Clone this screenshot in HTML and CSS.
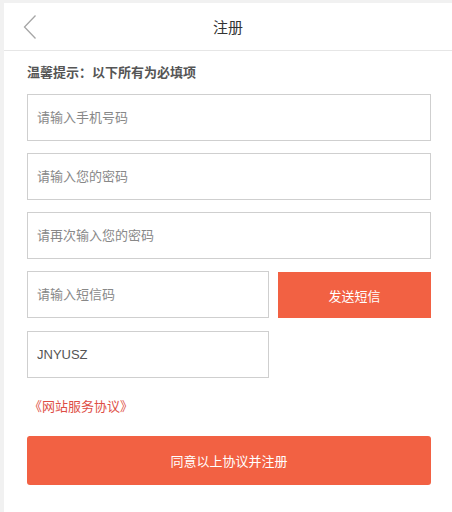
FILE: index.html
```html
<!DOCTYPE html>
<html lang="zh-CN">
<head>
    <meta charset="UTF-8">
    <meta name="viewport" content="width=device-width, initial-scale=1.0">
    <title>注册</title>
    <link rel="stylesheet" href="styles.css">
</head>
<body>
    <div class="page">
        <div class="header">
            <a class="back" href="#">
                <svg width="16" height="26" viewBox="0 0 16 26">
                    <path d="M13.5 1.5 L2.5 13 L13.5 24.5" fill="none" stroke="#a6a6a6" stroke-width="1.3"/>
                </svg>
            </a>
            <h1>注册</h1>
        </div>
        <form class="reg-form">
            <p class="hint">温馨提示：以下所有为必填项</p>
            <div class="form-group">
                <input type="text" placeholder="请输入手机号码">
            </div>
            <div class="form-group">
                <input type="password" placeholder="请输入您的密码">
            </div>
            <div class="form-group">
                <input type="password" placeholder="请再次输入您的密码">
            </div>
            <div class="form-group sms-row">
                <input type="text" class="short" placeholder="请输入短信码">
                <button type="button" class="btn-sms">发送短信</button>
            </div>
            <div class="form-group">
                <input type="text" class="short" value="JNYUSZ">
            </div>
            <a class="agreement" href="#">《网站服务协议》</a>
            <button type="submit" class="btn-submit">同意以上协议并注册</button>
        </form>
    </div>
</body>
</html>
```

FILE: styles.css
```css
body {
    margin: 0;
    background-color: #f1f1f1;
    font-family: "Liberation Sans", "Noto Sans CJK SC", sans-serif;
}
.page {
    margin: 3px 0 0 4px;
    min-height: 509px;
    background-color: #fff;
}
.header {
    position: relative;
    height: 47px;
    border-bottom: 1px solid #e6e6e6;
    display: flex;
    align-items: center;
    justify-content: center;
}
.back {
    position: absolute;
    left: 18px;
    top: 11px;
    display: block;
}
h1 {
    margin: 0;
    font-size: 15px;
    font-weight: normal;
    color: #333;
}
.reg-form {
    padding: 0 21px 0 23px;
}
.hint {
    margin: 0;
    padding: 12px 0 11px;
    line-height: 20px;
    font-size: 13px;
    font-weight: bold;
    color: #555;
}
.form-group {
    margin-bottom: 12px;
}
input[type="text"], input[type="password"] {
    width: 100%;
    height: 47px;
    padding: 0 9px;
    border: 1px solid #cfcfcf;
    border-radius: 0;
    box-sizing: border-box;
    font-family: inherit;
    font-size: 13px;
    color: #555;
    outline: none;
}
input::placeholder {
    color: #888;
}
input.short {
    width: 242px;
}
.sms-row {
    display: flex;
    gap: 9px;
    margin-bottom: 13px;
}
.btn-sms {
    flex: 1;
    height: 46px;
    margin-top: 1px;
    border: none;
    background-color: #f26143;
    color: #fff;
    font-family: inherit;
    font-size: 13px;
    cursor: pointer;
}
.agreement {
    display: block;
    margin: 19px 0 19px 2px;
    line-height: 20px;
    font-size: 13px;
    color: #de4e45;
    text-decoration: none;
}
.btn-submit {
    display: block;
    width: 100%;
    height: 49px;
    border: none;
    border-radius: 3px;
    background-color: #f26143;
    color: #fff;
    font-family: inherit;
    font-size: 13px;
    cursor: pointer;
}
```
